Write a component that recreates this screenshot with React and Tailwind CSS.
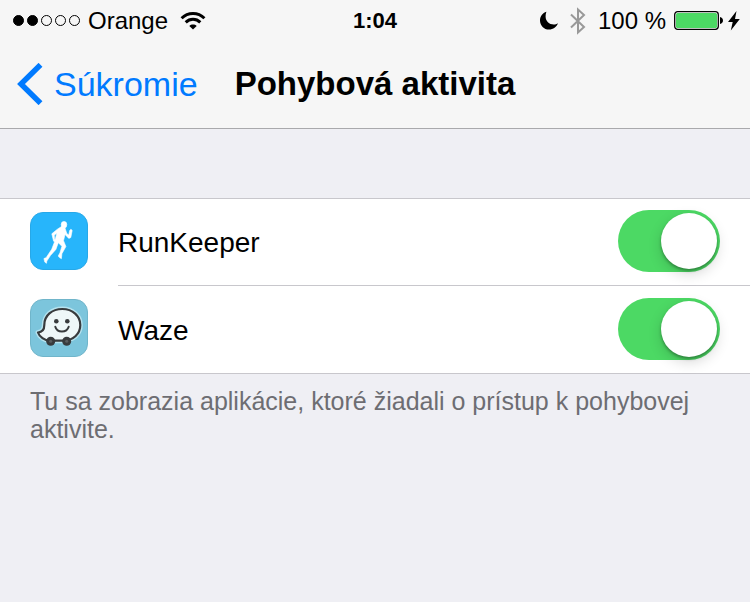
import React, { useState } from 'react';

function SignalDots() {
  return (
    <div className="flex gap-[3px]">
      {[true, true, false, false, false].map((filled, i) => (
        <span
          key={i}
          className={`w-[11px] h-[11px] rounded-full border border-black ${filled ? 'bg-black' : ''}`}
        />
      ))}
    </div>
  );
}

function WifiIcon() {
  return (
    <svg width="26" height="20" viewBox="0 0 26 20" fill="none" stroke="#000" strokeWidth="3">
      <path d="M1.6 7.2C8 .9 18 .9 24.4 7.2" />
      <path d="M5.7 11.3c4.2-4 10.4-4 14.6 0" />
      <path d="M13 18.6l-3.7-3.7c2-1.9 5.4-1.9 7.4 0z" fill="#000" stroke="none" />
    </svg>
  );
}

function MoonIcon() {
  return (
    <svg width="18" height="19" viewBox="0 0 18 19">
      <path d="M6.4.8C2.6 2 0 5.500 0 9.400 0 14.500 4 18.500 9 18.500c4.200 0 7.700-2.600 9-6.300-1.200.9-2.700 1.400-4.300 1.400-4.500 0-8.100-3.500-8.100-8C5.600 3.900 5.800 2.200 6.400.8z" />
    </svg>
  );
}

function BluetoothIcon() {
  return (
    <svg width="16" height="28" viewBox="0 0 16 28" fill="none" stroke="#999" strokeWidth="2">
      <path d="M1 7.500l13 12.500-6 5.500V2.500L14 8 1 20.500" />
    </svg>
  );
}

function BatteryIcon() {
  return (
    <svg width="49" height="20" viewBox="0 0 49 20">
      <rect x="0.700" y="0.700" width="43.600" height="17.600" rx="3" fill="#fff" stroke="#000" strokeWidth="1.300" />
      <rect x="2" y="2" width="41" height="15" rx="1.500" fill="#4cd964" />
      <path d="M46 6c1.800.3 3 1.700 3 3.500s-1.200 3.200-3 3.500z" />
    </svg>
  );
}

function BoltIcon() {
  return (
    <svg width="12" height="20" viewBox="0 0 12 20">
      <path d="M8.500 0L0 11h4.700L2.800 19.500 11.800 8H7z" />
    </svg>
  );
}

function RunKeeperIcon() {
  return (
    <svg className="shrink-0 mb-[3px]" width="58" height="58" viewBox="0 0 58 58">
      <rect x="0.500" y="0.500" width="57" height="57" rx="12.500" fill="#27b5fb" stroke="#27a8e8" />
      <g fill="#fff" stroke="#fff" strokeWidth="0.600" strokeLinejoin="round">
        <ellipse cx="34" cy="12.700" rx="2.800" ry="3.300" />
        <path d="M31.500 14.500l3.500 1.500 1.800 5.500 1.900 1.500 1-4.500 1.200-1.300 1.300 1.200-1.400 7.100-2 .9-3.800-3.900-1.500 6.200 2.400 5.800-4 7.200-.5 5-1.900-1.100-1.300-1.600 1.700-3.100 2-6.600-3.600-3.600-2.400 6.700-5.500 6.200-3.600 5.500-.3 2.200-1.700-1.200-.9-3.500 2.200-.9 5.600-8.400 3-7.800 2.200-8.600-2.600 2.400.2 3.600 1 1-.4 1.700-1.500-.4-1.800-7.400 5.600-4.600z" />
      </g>
    </svg>
  );
}

function WazeIcon() {
  return (
    <svg className="shrink-0 mb-[3px]" width="58" height="58" viewBox="0 0 58 58">
      <rect x="0.500" y="0.500" width="57" height="57" rx="12.500" fill="#7cc5dc" stroke="#70b5ca" />
      <path
        d="M8 33.500c4.300-.3 6.300-2.600 6.300-7.500C14.300 16.500 22 10 32.300 10S50.300 17 50.300 26 43 41.700 33 41.700H20C14.500 41.400 9.500 38 8 33.500z"
        fill="#eef7f8"
        stroke="#b5e2ee"
        strokeWidth="5"
        strokeLinejoin="round"
      />
      <path
        d="M8 33.500c4.300-.3 6.300-2.600 6.300-7.500C14.300 16.500 22 10 32.300 10S50.300 17 50.300 26 43 41.700 33 41.700H20C14.500 41.400 9.500 38 8 33.500z"
        fill="#eef7f8"
        stroke="#383b3d"
        strokeWidth="2.200"
        strokeLinejoin="round"
      />
      <g fill="#383b3d">
        <circle cx="20.700" cy="42.300" r="4.500" />
        <circle cx="36.700" cy="42.300" r="4.500" />
        <circle cx="26.300" cy="22.200" r="2.300" />
        <circle cx="37.300" cy="22.200" r="2.300" />
      </g>
      <g fill="#5a5d5f">
        <circle cx="20.700" cy="42.300" r="1.500" />
        <circle cx="36.700" cy="42.300" r="1.500" />
      </g>
      <path d="M25.300 27.800c1.800 6.400 11.400 6.400 13.400 0" fill="none" stroke="#383b3d" strokeWidth="2" strokeLinecap="round" />
    </svg>
  );
}

function StatusBar() {
  return (
    <div className="grid grid-cols-[1fr_auto_1fr] items-center h-10 px-[10px] pt-px text-2xl leading-9">
      <div className="flex items-center gap-2 pl-[3px]">
        <SignalDots />
        <span>Orange</span>
        <span className="pl-1"><WifiIcon /></span>
      </div>
      <span className="text-[22px] font-bold">1:04</span>
      <div className="flex items-center justify-end gap-2">
        <MoonIcon />
        <span className="px-1"><BluetoothIcon /></span>
        <span>100 %</span>
        <div className="flex items-center gap-[5px]">
          <BatteryIcon />
          <BoltIcon />
        </div>
      </div>
    </div>
  );
}

function AppRow({ id, name, icon, checked, onChange, last }) {
  return (
    <li className="flex items-center gap-[30px] pl-[30px]">
      {icon}
      <div className={`flex flex-1 items-center justify-between h-[87px] pr-[30px] ${last ? 'pb-px' : 'pb-[2px] border-b border-[#c8c7cc]'}`}>
        <label htmlFor={id} className="text-[28px] leading-8 pt-1">{name}</label>
        <input
          id={id}
          type="checkbox"
          role="switch"
          checked={checked}
          onChange={onChange}
          className="appearance-none flex items-center w-[102px] h-[62px] px-[3px] rounded-full cursor-pointer bg-[#e5e5ea] checked:bg-[#4cd964] checked:justify-end before:block before:w-14 before:h-14 before:rounded-full before:bg-white before:shadow-[0_5px_14px_rgba(0,0,0,0.16),0_2px_3px_rgba(0,0,0,0.3)]"
        />
      </div>
    </li>
  );
}

export default function App() {
  const [enabled, setEnabled] = useState({ runkeeper: true, waze: true });

  const toggle = (key) => setEnabled({ ...enabled, [key]: !enabled[key] });

  return (
    <div className="min-h-screen bg-[#efeff4] text-black font-['Liberation_Sans',Arial,sans-serif]">
      <header className="bg-[#f6f6f6] border-b border-[#a9a9ac]">
        <StatusBar />
        <nav className="grid grid-cols-[1fr_auto_1fr] items-center h-[88px] px-[17px] leading-10">
          <a href="#sukromie" className="flex items-center gap-[11px] text-[34px] text-[#007aff]">
            <svg width="26" height="42" viewBox="0 0 26 42" fill="none" stroke="#007aff" strokeWidth="5.500">
              <path d="M23.500 1.800L4 21l19.500 19.200" />
            </svg>
            Súkromie
          </a>
          <h1 className="text-[33px] font-bold">Pohybová aktivita</h1>
        </nav>
      </header>

      <main className="pt-[69px]">
        <ul className="bg-white border-y border-[#c8c7cc]">
          <AppRow
            id="runkeeper"
            name="RunKeeper"
            icon={<RunKeeperIcon />}
            checked={enabled.runkeeper}
            onChange={() => toggle('runkeeper')}
          />
          <AppRow
            id="waze"
            name="Waze"
            icon={<WazeIcon />}
            checked={enabled.waze}
            onChange={() => toggle('waze')}
            last
          />
        </ul>
        <p className="px-[30px] pt-[13px] text-[25px] leading-7 text-[#6d6d72]">
          Tu sa zobrazia aplikácie, ktoré žiadali o prístup k pohybovej aktivite.
        </p>
      </main>
    </div>
  );
}
